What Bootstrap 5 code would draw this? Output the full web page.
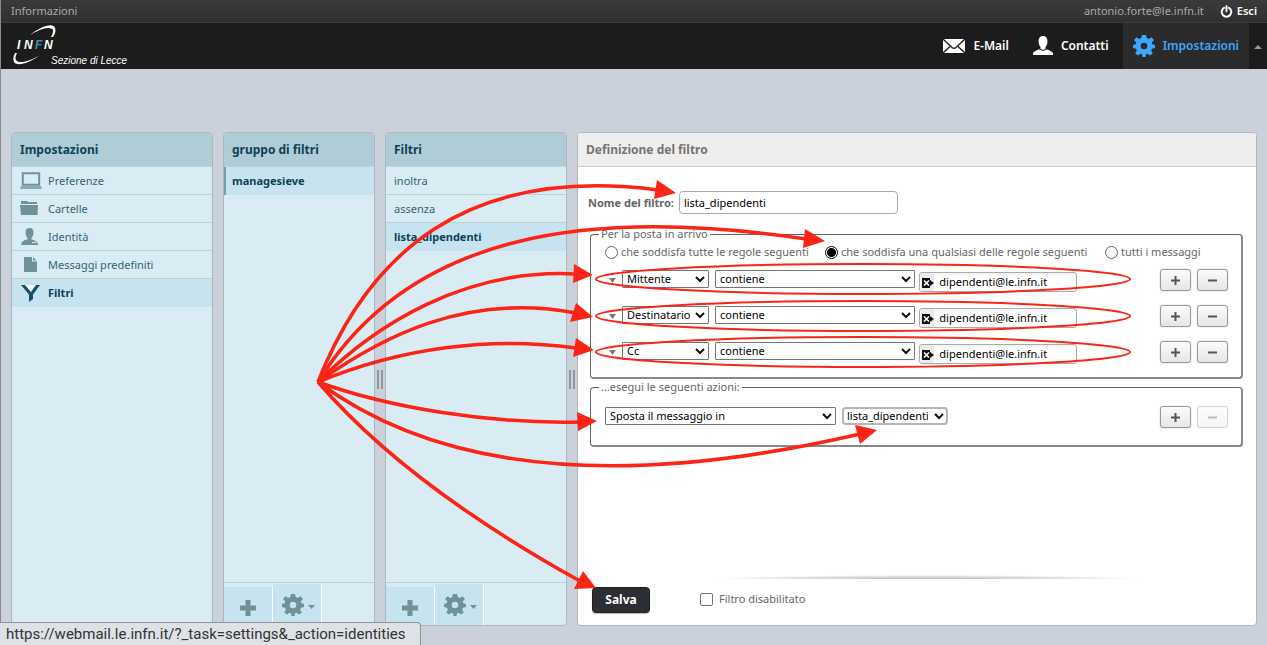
<!DOCTYPE html>
<html lang="it">
<head>
<meta charset="utf-8">
<meta name="viewport" content="width=device-width, initial-scale=1">
<title>Webmail INFN Lecce - Filtri</title>
<link href="https://cdn.jsdelivr.net/npm/bootstrap@5.3.0/dist/css/bootstrap.min.css" rel="stylesheet">
<style>
  :root { --ui: "Noto Sans", "Open Sans", sans-serif; --line: #bbd3da; --icon: #6f9299; }
  body { font-family: var(--ui); font-size: 11px; line-height: 16px; color: #666; background: #cad1da; border-left: 1px solid #8c8a8c; }
  a { text-decoration: none; }
  button, input, select { font-family: var(--ui); font-size: 11px; }

  /* top bars */
  .infobar { height: 23px; background: linear-gradient(#3a3a3a, #303030); border-bottom: 1px solid #3c3c3c; padding: 0 10px; color: #aaa; }
  .infobar a { color: #aaa; }
  .infobar .logout { color: #fff; font-weight: 600; }
  .taskbar { height: 46px; background: #1c1c1c; }
  .taskbar a { color: #fff; font-size: 12px; font-weight: 600; padding: 0 10px; }
  .taskbar a.current { color: #3da7fb; background: #2b2b2b; }
  .taskbar .brand { padding: 0 12px; font-weight: 400; }
  .fold { width: 18px; border: 0; background: #1c1c1c; padding: 0; }

  /* columns */
  .workspace { padding: 63px 10px 19px; }
  .pane { border: 1px solid #abb8c2; border-radius: 4px; background: #d9ecf4; overflow: hidden; }
  .pane-title { height: 34px; margin: 0; padding: 0 8px; font-size: 12px; line-height: 33px; font-weight: 700; color: #0e4257; background: #b0ccd7; border-bottom: 1px solid var(--line); }
  .w-sections { width: 202px; } .w-sets { width: 152px; } .w-filters { width: 182px; }
  .gutter { width: 10px; }
  .grip { width: 6px; height: 19px; border: solid #8f979f; border-width: 0 2px; }
  .pane .list-group-item { height: 28px; padding: 0 8px; display: flex; align-items: center; gap: 6px; font-size: 11px; color: #376272; background: transparent; border: 0; border-bottom: 1px solid var(--line); }
  .pane .list-group-item.active { margin: 0; background: #c7e3ef; color: #0e4257; font-weight: 700; }
  .pane .w-sets-item.active { border-left: 2px solid #739da8; padding-left: 6px; }
  .pane-foot { height: 43px; border-top: 1px solid var(--line); }
  .pane-foot button { width: 49px; padding: 0; border: 0; border-right: 1px solid #fff; background: #c7e3ef; }
  .pane-foot .add { margin-top: 4px; padding-top: 3px; }
  .pane-foot .more { margin-top: 1px; padding-left: 3px; }

  /* filter form */
  .editor { background: #fff; }
  .editor .pane-title { background: #eee; color: #757575; border-color: #ccc; }
  .editor-body { padding: 24px 13px 0 12px; }
  .name-row { margin-left: -2px; gap: 5px; }
  .name-row label { font-weight: 700; }
  .name-row input { width: 219px; height: 23px; padding: 0 4px; border: 1px solid #aaa; border-radius: 4px; color: #000; }
  .box { border: solid; border-width: 1px 2px 2px 1px; border-color: #666 #888 #888 #666; border-radius: 4px; padding: 0 13px 0 14px; }
  .box legend { float: none; width: auto; margin: 0 0 0 -6px; padding: 0 2px; font-size: 11px; line-height: 16px; }
  .conditions { margin-top: 12px; height: 153px; }
  .actions { height: 68px; }
  .box .form-check-input { width: 13px; height: 13px; margin: 0; border: 1px solid #666; background: #fff; }
  .box .form-check-input:checked { background: radial-gradient(circle, #000 0 4px, #fff 5px); border-color: #000; }
  .choice { gap: 3px; height: 20px; }
  .choice-all { min-width: 212px; } .choice-any { min-width: 272px; }
  .rule { height: 36px; gap: 6px; }
  .rule .pick { margin-bottom: 2px; }
  .pick { appearance: none; height: 18px; padding: 0 18px 0 4px; color: #000; border: 1px solid #767676; border-radius: 1px; line-height: 16px;
    background: #fff url("data:image/svg+xml,%3Csvg xmlns='http://www.w3.org/2000/svg' viewBox='0 0 10 7'%3E%3Cpath d='M1 1l4 4 4-4' fill='none' stroke='%23111' stroke-width='2'/%3E%3C/svg%3E") no-repeat right 3px center / 10px 7px; }
  .p-head { width: 87px; } .p-op { width: 200px; } .p-act { width: 231px; }
  .p-dest { width: 106px; border: 2px solid #b5b5b5; border-radius: 4px; padding-left: 3px; line-height: 14px; background-position: right 2px center; }
  .value { width: 158px; height: 20px; margin-left: -2px; border: 1px solid #aaa; border-radius: 3px; background: linear-gradient(#f2f2f2, #fff 5px); }
  .value input { min-width: 0; border: 0; background: transparent; padding: 0 5px; color: #000; }
  .value .clear { width: 16px; margin-left: 1px; padding: 0; border: 0; background: #ececec; }
  .steps { gap: 6px; }
  .step { width: 31px; height: 22px; padding: 0; border: 1px solid #999; border-radius: 3px; background: linear-gradient(#fbfbfb, #e6e6e6); box-shadow: 0 0 1px #888; line-height: 0; }
  .step:disabled { opacity: .4; }
  .twist { width: 11px; padding: 0 0 0 3px; border: 0; background: none; line-height: 0; }
  .fade-rule { height: 4px; margin: 0 100px 0 120px; background: radial-gradient(ellipse 50% 100% at 50% 100%, #bbb, #ddd 60%, #fff); }
  .editor-foot { padding: 0 14px; }
  .form-foot { padding: 8px 0 12px; gap: 50px; }
  .save { width: 58px; height: 26px; padding: 0; font-size: 12px; line-height: 24px; font-weight: 700; color: #fff; background: #2b2e33; border: 1px solid #222; border-radius: 4px; box-shadow: 0 1px 1px #bbb; }
  .form-foot .form-check-input { width: 13px; height: 13px; margin: 2px 0 0; border: 1px solid #767676; border-radius: 2px; }
  .off-switch { gap: 6px; }

  .link-status { left: 0; bottom: 0; height: 23px; min-width: 421px; padding: 0 7px 0 6px; font-family: Roboto, sans-serif; font-size: 15px; line-height: 22px; color: #333; background: #dee1e6; border: solid #8f9297; border-width: 1px 1px 0 0; border-radius: 0 4px 0 0; }
  .notes { left: 0; top: 0; z-index: 10; pointer-events: none; }
</style>
</head>
<body class="d-flex flex-column min-vh-100 position-relative">

<header>
  <div class="infobar d-flex align-items-center justify-content-between">
    <a href="#">Informazioni</a>
    <div class="d-flex align-items-center">
      <span class="me-3">antonio.forte@le.infn.it</span>
      <a href="#" class="logout d-flex align-items-center gap-1">
        <svg width="13" height="13" viewBox="0 0 13 13" fill="none" stroke="#fff" stroke-width="2" stroke-linecap="round"><path d="M4 2.800a4.800 4.800 0 1 0 5 0M6.500 1.200v5"/></svg>Esci</a>
    </div>
  </div>
  <nav class="taskbar d-flex align-items-stretch">
    <a href="#" class="brand me-auto" aria-label="INFN Sezione di Lecce">
      <svg width="120" height="44" viewBox="0 0 120 44">
        <path d="M17 12C27 4 40-1 42 5c1 3 0 6-2 9l-2 0c2-4 3-7 1-8-4-3-14 1-22 6z" fill="#fff"/>
        <path d="M27 32C17 40 4 44 1 39c-1-3-1-5 1-9l2 0c-2 4-2 7 0 8 4 3 15-1 23-6z" fill="#fff"/>
        <g font-family="Liberation Sans" font-weight="700" font-style="italic" font-size="12" fill="#fff">
          <text x="4" y="26">I</text><text x="11" y="26">N</text><text x="22" y="26" fill="#3c8fb5">F</text><text x="31" y="26">N</text>
        </g>
        <text x="38" y="41" font-family="Liberation Sans" font-style="italic" font-size="10" fill="#fff">Sezione di Lecce</text>
      </svg>
    </a>
    <a href="#" class="d-flex align-items-center gap-2">
      <svg width="22" height="16" viewBox="0 0 22 16"><path fill="#fff" d="M0 1h22v14H0z"/><path d="M0 1l9 8.500q2 1.500 4 0L22 1M0 15l7.500-7M22 15l-7.500-7" fill="none" stroke="#1c1c1c" stroke-width="1.300"/></svg>E-Mail</a>
    <a href="#" class="d-flex align-items-center gap-2 ms-1">
      <svg width="20" height="20" viewBox="0 0 20 20" fill="#fff"><path d="M10 0c3 0 4.500 2 4.500 5 0 3-1 5-2 6v2c3 1 6.500 2 7.500 4v2H0v-2c1-2 4-3 7.500-4v-2c-1-1-2-3-2-6 0-3 1.500-5 4.500-5z"/><path d="M6.500 13l3.500 1.500 3.500-1.500" fill="none" stroke="#1c1c1c"/></svg>Contatti</a>
    <a href="#" class="current d-flex align-items-center gap-2 ms-1">
      <svg width="22" height="22" viewBox="-11 -11 22 22" fill="#3da7fb"><path fill-rule="evenodd" d="M-2-11h4l.8 3 2 .9L7.500-8.800 10-6 7.700-3.500l.6 1.700L11-1v3l-3 .8-.8 2L8.800 7.500 6 9.500 3.500 7.700 2 8.300 1.500 11h-3L-2 8.300-3.500 7.700-6 9.500-8.800 7.500-7.200 4.800-8 2.800-11 2v-3l2.700-.8.6-1.700L-10-6-7.500-8.800-4.800-7.100-2.800-8zM0-3.300a3.300 3.300 0 1 0 0 6.600 3.300 3.300 0 1 0 0-6.600z"/></svg>Impostazioni</a>
    <button class="fold" type="button" aria-label="Comprimi"><svg width="8" height="4" viewBox="0 0 8 4"><path d="M0 4l4-4 4 4z" fill="#999"/></svg></button>
  </nav>
</header>

<main class="workspace d-flex flex-grow-1 align-items-stretch">
  <section class="pane w-sections flex-shrink-0">
    <h2 class="pane-title">Impostazioni</h2>
    <div class="list-group list-group-flush rounded-0">
      <a href="#" class="list-group-item"><svg width="22" height="18" viewBox="0 0 22 18"><path d="M2.800 1.200h16.400v11.600H2.800z" fill="none" stroke="#6f9299" stroke-width="2"/><path d="M1 14h20l1 3H0z" fill="#8aabb2"/></svg>Preferenze</a>
      <a href="#" class="list-group-item"><svg width="22" height="18" viewBox="0 0 22 18" fill="#6f9299"><path d="M1 3V1h6l1 1h9v2H1zM0 5h18l-.5 10H1z"/></svg>Cartelle</a>
      <a href="#" class="list-group-item"><svg width="22" height="18" viewBox="0 0 22 18" fill="#6f9299"><path d="M9.500 0c3 0 4 2 4 4.500S12.500 9 11.500 10v1.500c3 .5 6 2 7 5.500H1c.5-3.500 3-5 6.500-5.500V10c-1-1-2-3-2-5.500S6.500 0 9.500 0z"/><path d="M12 14.500h4" stroke="#d9ecf4"/></svg>Identità</a>
      <a href="#" class="list-group-item"><svg width="22" height="18" viewBox="0 0 22 18" fill="#6f9299"><path d="M4 1h8v4.500h5V16H4zM13 1l3.500 3.500H13z"/></svg>Messaggi predefiniti</a>
      <a href="#" class="list-group-item active"><svg width="22" height="18" viewBox="0 0 22 18"><path d="M4 1h14l-7 8z" fill="#fff"/><path d="M1 1h4l6 7 5-7h4l-7 9.500V15l-4 3v-7.500z" fill="#14516a"/></svg>Filtri</a>
    </div>
  </section>
  <div class="gutter flex-shrink-0"></div>

  <section class="pane w-sets flex-shrink-0 d-flex flex-column">
    <h2 class="pane-title">gruppo di filtri</h2>
    <div class="list-group list-group-flush rounded-0 flex-grow-1">
      <a href="#" class="list-group-item w-sets-item active">managesieve</a>
    </div>
    <div class="pane-foot d-flex">
      <button class="add" type="button" aria-label="Aggiungi gruppo"><svg width="18" height="18" viewBox="0 0 18 18"><path d="M9 1v16M1 9h16" stroke="#6f9299" stroke-width="5"/></svg></button>
      <button class="more" type="button" aria-label="Altre azioni"><svg width="34" height="22" viewBox="-11 -11 34 22" fill="#6f9299"><path fill-rule="evenodd" d="M-2-11h4l.8 3 2 .9L7.500-8.800 10-6 7.700-3.500l.6 1.700L11-1v3l-3 .8-.8 2L8.800 7.500 6 9.500 3.500 7.700 2 8.300 1.500 11h-3L-2 8.300-3.500 7.700-6 9.500-8.800 7.500-7.200 4.800-8 2.800-11 2v-3l2.700-.8.6-1.700L-10-6-7.500-8.800-4.800-7.100-2.800-8zM0-3.300a3.300 3.300 0 1 0 0 6.600 3.300 3.300 0 1 0 0-6.600z"/><path d="M15 0h7l-3.500 4z"/></svg></button>
    </div>
  </section>
  <div class="gutter flex-shrink-0 d-flex align-items-center justify-content-center"><div class="grip"></div></div>

  <section class="pane w-filters flex-shrink-0 d-flex flex-column">
    <h2 class="pane-title">Filtri</h2>
    <div class="list-group list-group-flush rounded-0 flex-grow-1">
      <a href="#" class="list-group-item">inoltra</a>
      <a href="#" class="list-group-item">assenza</a>
      <a href="#" class="list-group-item active">lista_dipendenti</a>
    </div>
    <div class="pane-foot d-flex">
      <button class="add" type="button" aria-label="Aggiungi filtro"><svg width="18" height="18" viewBox="0 0 18 18"><path d="M9 1v16M1 9h16" stroke="#6f9299" stroke-width="5"/></svg></button>
      <button class="more" type="button" aria-label="Altre azioni"><svg width="34" height="22" viewBox="-11 -11 34 22" fill="#6f9299"><path fill-rule="evenodd" d="M-2-11h4l.8 3 2 .9L7.500-8.800 10-6 7.700-3.500l.6 1.700L11-1v3l-3 .8-.8 2L8.800 7.500 6 9.500 3.500 7.700 2 8.300 1.500 11h-3L-2 8.300-3.500 7.700-6 9.500-8.800 7.500-7.200 4.800-8 2.800-11 2v-3l2.700-.8.6-1.700L-10-6-7.500-8.800-4.800-7.100-2.800-8zM0-3.300a3.300 3.300 0 1 0 0 6.600 3.300 3.300 0 1 0 0-6.600z"/><path d="M15 0h7l-3.500 4z"/></svg></button>
    </div>
  </section>
  <div class="gutter flex-shrink-0 d-flex align-items-center justify-content-center"><div class="grip"></div></div>

  <section class="pane editor flex-grow-1">
    <form class="d-flex flex-column h-100">
      <h2 class="pane-title">Definizione del filtro</h2>
      <div class="editor-body flex-grow-1">
        <div class="name-row d-flex align-items-center">
          <label for="fname">Nome del filtro:</label>
          <input id="fname" type="text" value="lista_dipendenti">
        </div>

        <fieldset class="box conditions">
          <legend>Per la posta in arrivo</legend>
          <div class="d-flex gap-2">
            <div class="choice choice-all d-flex align-items-center"><input class="form-check-input" type="radio" name="join" id="j-all"><label for="j-all">che soddisfa tutte le regole seguenti</label></div>
            <div class="choice choice-any d-flex align-items-center"><input class="form-check-input" type="radio" name="join" id="j-any" checked><label for="j-any">che soddisfa una qualsiasi delle regole seguenti</label></div>
            <div class="choice d-flex align-items-center"><input class="form-check-input" type="radio" name="join" id="j-every"><label for="j-every">tutti i messaggi</label></div>
          </div>
          <div class="rule d-flex align-items-center">
            <button class="twist" type="button" aria-label="Avanzate"><svg width="7" height="5" viewBox="0 0 7 5"><path d="M0 0h7L3.500 5z" fill="#777"/></svg></button>
            <select class="pick p-head" aria-label="Campo"><option>Mittente</option></select>
            <select class="pick p-op" aria-label="Operatore"><option>contiene</option></select>
            <div class="value d-flex mt-1">
              <button class="clear" type="button" aria-label="Svuota"><svg width="12" height="10" viewBox="0 0 12 10"><path d="M0 0h8v2l4 3-4 3v2H0z" fill="#111"/><path d="M2 2.500l5 5M7 2.500l-5 5" stroke="#fff" stroke-width="1.500"/></svg></button>
              <input type="text" aria-label="Valore" value="dipendenti@le.infn.it">
            </div>
            <div class="d-flex ms-auto steps">
              <button class="step" type="button" aria-label="Aggiungi"><svg width="9" height="9" viewBox="0 0 9 9"><path d="M4.500 0v9M0 4.500h9" stroke="#555" stroke-width="2"/></svg></button>
              <button class="step" type="button" aria-label="Elimina"><svg width="9" height="9" viewBox="0 0 9 9"><path d="M0 4.500h9" stroke="#555" stroke-width="2"/></svg></button>
            </div>
          </div>
          <div class="rule d-flex align-items-center">
            <button class="twist" type="button" aria-label="Avanzate"><svg width="7" height="5" viewBox="0 0 7 5"><path d="M0 0h7L3.500 5z" fill="#777"/></svg></button>
            <select class="pick p-head" aria-label="Campo"><option>Destinatario</option></select>
            <select class="pick p-op" aria-label="Operatore"><option>contiene</option></select>
            <div class="value d-flex mt-1">
              <button class="clear" type="button" aria-label="Svuota"><svg width="12" height="10" viewBox="0 0 12 10"><path d="M0 0h8v2l4 3-4 3v2H0z" fill="#111"/><path d="M2 2.500l5 5M7 2.500l-5 5" stroke="#fff" stroke-width="1.500"/></svg></button>
              <input type="text" aria-label="Valore" value="dipendenti@le.infn.it">
            </div>
            <div class="d-flex ms-auto steps">
              <button class="step" type="button" aria-label="Aggiungi"><svg width="9" height="9" viewBox="0 0 9 9"><path d="M4.500 0v9M0 4.500h9" stroke="#555" stroke-width="2"/></svg></button>
              <button class="step" type="button" aria-label="Elimina"><svg width="9" height="9" viewBox="0 0 9 9"><path d="M0 4.500h9" stroke="#555" stroke-width="2"/></svg></button>
            </div>
          </div>
          <div class="rule d-flex align-items-center">
            <button class="twist" type="button" aria-label="Avanzate"><svg width="7" height="5" viewBox="0 0 7 5"><path d="M0 0h7L3.500 5z" fill="#777"/></svg></button>
            <select class="pick p-head" aria-label="Campo"><option>Cc</option></select>
            <select class="pick p-op" aria-label="Operatore"><option>contiene</option></select>
            <div class="value d-flex mt-1">
              <button class="clear" type="button" aria-label="Svuota"><svg width="12" height="10" viewBox="0 0 12 10"><path d="M0 0h8v2l4 3-4 3v2H0z" fill="#111"/><path d="M2 2.500l5 5M7 2.500l-5 5" stroke="#fff" stroke-width="1.500"/></svg></button>
              <input type="text" aria-label="Valore" value="dipendenti@le.infn.it">
            </div>
            <div class="d-flex ms-auto steps">
              <button class="step" type="button" aria-label="Aggiungi"><svg width="9" height="9" viewBox="0 0 9 9"><path d="M4.500 0v9M0 4.500h9" stroke="#555" stroke-width="2"/></svg></button>
              <button class="step" type="button" aria-label="Elimina"><svg width="9" height="9" viewBox="0 0 9 9"><path d="M0 4.500h9" stroke="#555" stroke-width="2"/></svg></button>
            </div>
          </div>
        </fieldset>

        <fieldset class="box actions">
          <legend>...esegui le seguenti azioni:</legend>
          <div class="rule d-flex align-items-center mt-1">
            <select class="pick p-act" aria-label="Azione"><option>Sposta il messaggio in</option></select>
            <select class="pick p-dest" aria-label="Cartella"><option>lista_dipendenti</option></select>
            <div class="d-flex ms-auto steps">
              <button class="step" type="button" aria-label="Aggiungi"><svg width="9" height="9" viewBox="0 0 9 9"><path d="M4.500 0v9M0 4.500h9" stroke="#555" stroke-width="2"/></svg></button>
              <button class="step" type="button" aria-label="Elimina" disabled><svg width="9" height="9" viewBox="0 0 9 9"><path d="M0 4.500h9" stroke="#555" stroke-width="2"/></svg></button>
            </div>
          </div>
        </fieldset>
      </div>

      <div class="editor-foot">
        <div class="fade-rule"></div>
        <div class="form-foot d-flex">
          <button class="save" type="submit">Salva</button>
          <div class="off-switch d-flex mt-1"><input class="form-check-input" type="checkbox" id="off"><label for="off">Filtro disabilitato</label></div>
        </div>
      </div>
    </form>
  </section>
</main>

<div class="link-status position-fixed">https://webmail.le.infn.it/?_task=settings&amp;_action=identities</div>

<!-- red arrows and ovals drawn over the page -->
<svg class="notes position-absolute" width="1140" height="600" viewBox="1 0 1140 600" aria-hidden="true">
  <g fill="none" stroke="#fb2416" stroke-width="3.600">
    <path d="M318 382C368 255 465 165 658 190"/>
    <path d="M318 382C410 232 590 207 806 239"/>
    <path d="M318 382C375 325 465 268 576 274"/>
    <path d="M318 382C380 338 465 292 576 313"/>
    <path d="M318 382C400 348 490 336 576 348"/>
    <path d="M318 382C390 408 490 424 580 422"/>
    <path d="M318 382C450 480 640 485 860 434"/>
    <path d="M318 382C378 452 470 520 580 581"/>
  </g>
  <g fill="#fb2416">
    <path d="M657 180L654 199L676 193z"/><path d="M805 229L803 248L825 241z"/>
    <path d="M574 264L573 283L593 275z"/><path d="M576 303L570 322L593 317z"/>
    <path d="M576 338L573 357L594 350z"/><path d="M577 412L578 431L597 421z"/>
    <path d="M855 425L860 444L877 430z"/><path d="M583 571L574 589L596 588z"/>
  </g>
  <g fill="none" stroke="#fb2416" stroke-width="2">
    <ellipse cx="863" cy="279" rx="267" ry="15"/>
    <ellipse cx="863" cy="316" rx="267" ry="15"/>
    <ellipse cx="863" cy="352" rx="267" ry="15"/>
  </g>
</svg>

<script src="https://cdn.jsdelivr.net/npm/bootstrap@5.3.0/dist/js/bootstrap.bundle.min.js"></script>
</body>
</html>
